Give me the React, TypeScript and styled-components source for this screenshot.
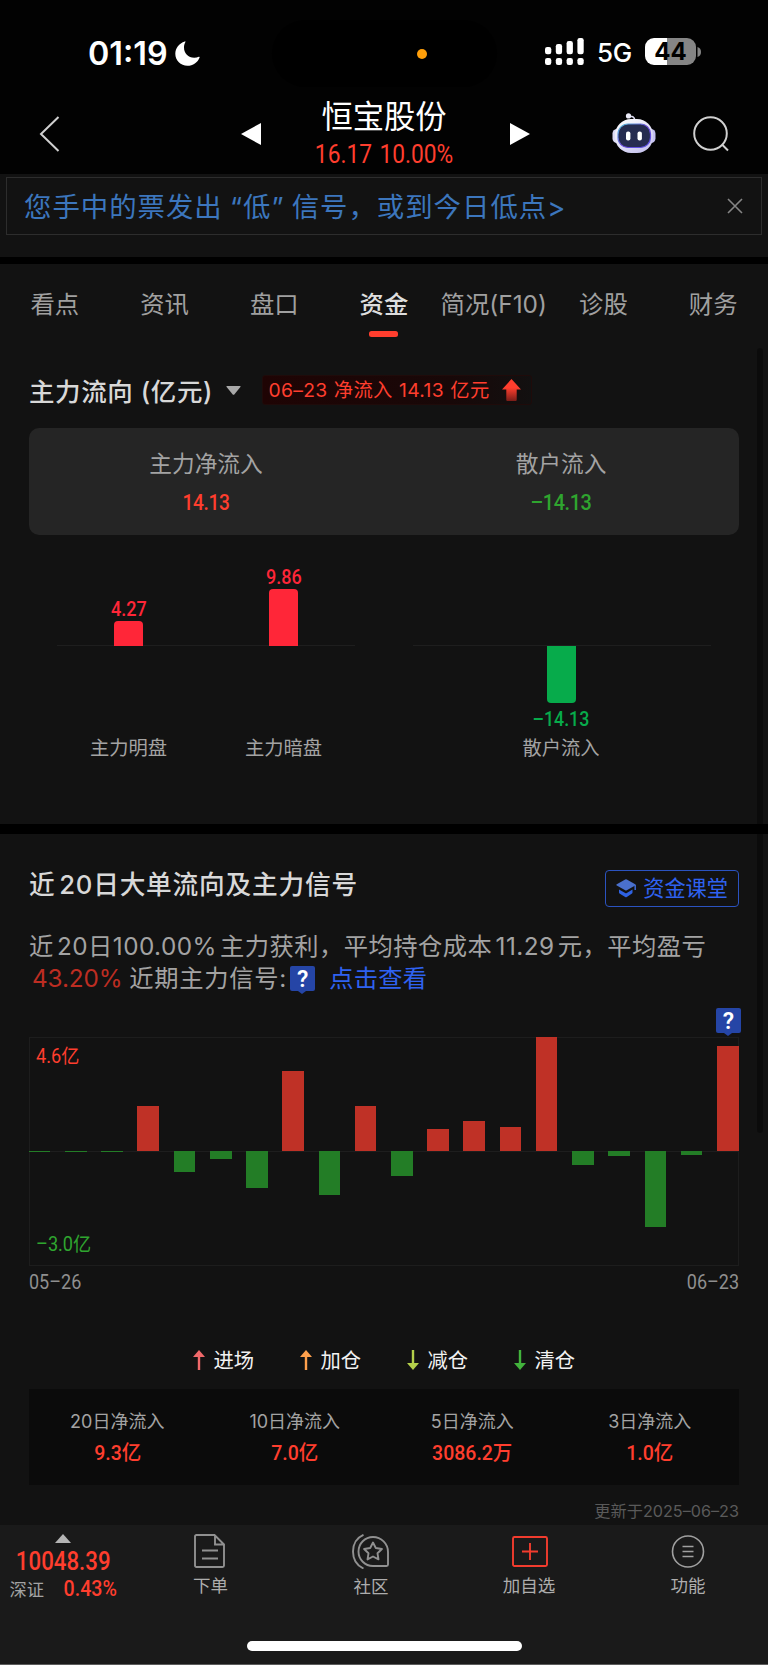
import React from 'react';
import styled, { createGlobalStyle } from 'styled-components';

const RED = '#ff3e2e';
const GREEN = '#2fa52f';
const TEXT = "Inter, 'Noto Sans CJK SC', sans-serif";
const DIGITS = "Roboto, 'Noto Sans CJK SC', sans-serif";

const Global = createGlobalStyle`
  * { box-sizing: border-box; }
  body { margin: 0; background: #121212; font-family: ${TEXT}; }
  svg { display: block; flex: none; }
`;

const Page = styled.div`
  position: relative;
  width: 768px;
  height: 1665px;
  overflow: hidden;
  display: flex;
  flex-direction: column;
  background: #121212;
  white-space: nowrap;
`;

interface LabelProps {
  $size: number;
  $color?: string;
  $weight?: number;
  $gap?: number;
  $space?: number;
  $digits?: boolean;
  $narrow?: number;
  $origin?: string;
  $dy?: number;
}

const Label = styled.span<LabelProps>`
  display: block;
  font-family: ${(p) => (p.$digits ? DIGITS : TEXT)};
  font-size: ${(p) => p.$size}px;
  font-weight: ${(p) => p.$weight ?? 400};
  line-height: 1;
  letter-spacing: ${(p) => p.$gap ?? 0}px;
  word-spacing: ${(p) => p.$space ?? 0}px;
  margin-right: ${(p) => -(p.$gap ?? 0)}px;
  color: ${(p) => p.$color ?? '#a3a3a3'};
  transform: translateY(${(p) => p.$dy ?? 0}px) scaleX(${(p) => p.$narrow ?? 1});
  transform-origin: ${(p) => p.$origin ?? 'center'};
`;

const Space = styled.div<{ $width: number }>`
  width: ${(p) => p.$width}px;
  flex: none;
`;

const Top = styled.header`
  height: 174px;
  flex: none;
  background: #020202;
`;

const StatusBar = styled.div`
  height: 87px;
  padding: 20px 67px 0 88px;
  display: grid;
  grid-template-columns: 184px 225px 1fr;
`;

const Clock = styled.div`
  height: 66px;
  display: flex;
  align-items: center;
  gap: 7px;
`;

const Island = styled.div`
  height: 67px;
  border-radius: 34px;
  background: #000;
  padding: 28.5px 0 0 145px;
`;

const MicDot = styled.div`
  width: 10px;
  height: 10px;
  border-radius: 50%;
  background: #ff9f0a;
`;

const Signals = styled.div`
  height: 63px;
  display: flex;
  align-items: center;
  justify-content: flex-end;
`;

const Network = styled.div`
  width: 61px;
  padding-left: 13px;
`;

const Battery = styled.div`
  width: 51px;
  height: 27px;
  border-radius: 9px;
  background: linear-gradient(90deg, #fff 43%, #858585 43%);
  display: flex;
  align-items: center;
  justify-content: center;
`;

const NavBar = styled.div`
  height: 87px;
  padding: 6px 39px 0;
  display: grid;
  grid-template-columns: 202px 20px 249px 1fr;
  align-items: center;
`;

const NavTitle = styled.div`
  height: 81px;
  padding: 9px 3px 0 0;
  display: flex;
  flex-direction: column;
  align-items: center;
  gap: 9px;
`;

const NavIcons = styled.div`
  display: flex;
  align-items: center;
  justify-content: space-between;
`;

const NavTools = styled.div`
  width: 117px;
  display: flex;
  align-items: center;
  justify-content: space-between;
`;

const NoticeArea = styled.section`
  height: 83px;
  flex: none;
  padding: 3px 6px;
`;

const Notice = styled.div`
  height: 58px;
  border: 1px solid #2d2d2d;
  padding: 0 18px 0 17px;
  display: flex;
  align-items: center;
  justify-content: space-between;
`;

const Divider = styled.div<{ $height: number }>`
  height: ${(p) => p.$height}px;
  flex: none;
  background: #000;
`;

const Tabs = styled.nav`
  height: 90px;
  flex: none;
  display: grid;
  grid-template-columns: repeat(7, 1fr);
`;

const Tab = styled.div`
  padding-top: 28px;
  display: flex;
  flex-direction: column;
  align-items: center;
  gap: 15px;
`;

const TabMark = styled.div`
  width: 29px;
  height: 6px;
  border-radius: 2.5px;
  background: ${RED};
`;

const FlowSection = styled.section`
  height: 470px;
  flex: none;
  padding: 21px 29px 0;
`;

const FlowHead = styled.div`
  height: 30px;
  display: flex;
  align-items: center;
`;

const FlowTag = styled.div`
  width: 270px;
  height: 30px;
  margin-left: 21px;
  padding: 0 10px 0 5px;
  border: 1px solid #1f0b0a;
  border-radius: 3px;
  background: linear-gradient(90deg, #1f0404, #180808 70%, #121010);
  display: flex;
  align-items: center;
  justify-content: space-between;
`;

const Caret = styled.svg`
  margin-left: 14px;
`;

const SummaryCard = styled.div`
  height: 107px;
  margin-top: 23px;
  border-radius: 10px;
  background: #252525;
  display: grid;
  grid-template-columns: 1fr 1fr;
`;

const SummaryCell = styled.div`
  padding: 25px 1px 0 0;
  display: flex;
  flex-direction: column;
  align-items: center;
  gap: 16px;
`;

const FlowChart = styled.div`
  display: flex;
  justify-content: space-between;
  padding: 33px 28px 0;
`;

const BarGroup = styled.div`
  width: 298px;
  display: flex;
  justify-content: center;
  background: linear-gradient(#1e1e1e, #1e1e1e) 0 77px / 100% 1px no-repeat;
`;

const BarColumn = styled.div`
  width: 155px;
  flex: none;
  display: flex;
  flex-direction: column;
  align-items: center;
`;

const BarUpper = styled.div`
  height: 78px;
  display: flex;
  flex-direction: column;
  align-items: center;
  justify-content: flex-end;
  gap: 2px;
`;

const BarLower = styled.div`
  height: 92.5px;
  display: flex;
  flex-direction: column;
  align-items: center;
  gap: 6px;
`;

const FlowBar = styled.div<{ $up?: boolean }>`
  width: 29px;
  flex: none;
  border-radius: ${(p) => (p.$up ? '4px 4px 0 0' : '0 0 4px 4px')};
  background: ${(p) => (p.$up ? '#ff2638' : '#07ab4b')};
`;

const RetailGroup = styled(BarGroup)`
  padding-right: 2px;
`;

const TrendSection = styled.section`
  height: 691px;
  flex: none;
  padding: 36px 29px 0;
`;

const TrendHead = styled.div`
  height: 37px;
  display: flex;
  align-items: center;
  justify-content: space-between;
`;

const LessonButton = styled.div`
  width: 134px;
  height: 37px;
  border: 1px solid #2b53c0;
  border-radius: 4px;
  padding: 0 10px;
  display: flex;
  align-items: center;
  justify-content: space-between;
`;

const Paragraph = styled.div`
  padding-top: 23px;
`;

const Line = styled.div`
  height: 32px;
  display: flex;
  align-items: center;
`;

const Pin = styled.div`
  position: relative;
  width: 25px;
  height: 25px;
  border-radius: 2px;
  background: #2545a6;
  display: flex;
  align-items: center;
  justify-content: center;
  &::after {
    content: '';
    position: absolute;
    left: 8px;
    top: 25px;
    border: 4.5px solid transparent;
    border-top: 3.5px solid #2545a6;
    border-bottom: 0;
  }
`;

const PinRow = styled.div`
  height: 43px;
  padding-top: 14px;
  margin-right: -2px;
  display: flex;
  justify-content: flex-end;
`;

const TrendChart = styled.div`
  height: 229px;
  border: 1px solid #1d1d1d;
  position: relative;
`;

const Scale = styled.div<{ $bottom?: boolean }>`
  position: absolute;
  left: 6px;
  ${(p) => (p.$bottom ? 'bottom: 11px;' : 'top: 9px;')}
`;

const Dates = styled.div`
  height: 31px;
  display: flex;
  align-items: center;
  justify-content: space-between;
`;

const Legend = styled.div`
  height: 42px;
  margin-top: 42px;
  display: flex;
  justify-content: center;
  align-items: center;
  gap: 46px;
`;

const LegendItem = styled.div`
  width: 61px;
  display: flex;
  align-items: center;
  justify-content: space-between;
`;

const Totals = styled.div`
  height: 96px;
  margin-top: 8px;
  background: #0b0b0b;
  display: grid;
  grid-template-columns: repeat(4, 1fr);
`;

const Total = styled.div`
  padding: 24px 1px 0 0;
  display: flex;
  flex-direction: column;
  align-items: center;
  gap: 12px;
`;

const Updated = styled.div`
  height: 40px;
  padding-top: 18px;
  display: flex;
  justify-content: flex-end;
`;

const Footer = styled.footer`
  height: 140px;
  flex: none;
  background: #1a1a1a;
  border-bottom: 1px solid #5c5c5c;
  display: flex;
  flex-direction: column;
  align-items: center;
  justify-content: space-between;
  padding-bottom: 13px;
`;

const FooterNav = styled.div`
  width: 100%;
  display: grid;
  grid-template-columns: 127px 167px 154px 162px 156px;
`;

const IndexBox = styled.div`
  padding: 9px 1px 0 0;
  display: flex;
  flex-direction: column;
  gap: 6px;
  align-items: center;
`;

const IndexRow = styled.div`
  width: 107px;
  margin-top: -2px;
  display: flex;
  justify-content: space-between;
  align-items: center;
`;

const FooterItem = styled.div`
  padding-top: 9px;
  display: flex;
  flex-direction: column;
  align-items: center;
  gap: 9px;
`;

const FooterIcon = styled.div<{ $shift: number }>`
  transform: translateX(${(p) => p.$shift}px);
`;

const HomeIndicator = styled.div`
  width: 275px;
  height: 10px;
  border-radius: 5px;
  background: #fff;
`;

const ScrollThumb = styled.div`
  position: absolute;
  left: 757px;
  top: 348px;
  width: 6px;
  height: 785px;
  border-radius: 3px;
  background: rgba(0, 0, 0, 0.35);
`;

const tabs = ['看点', '资讯', '盘口', '资金', '简况(F10)', '诊股', '财务'];

const flows = [
  { name: '主力明盘', value: '4.27', size: 25 },
  { name: '主力暗盘', value: '9.86', size: 57.5 },
];

const trend = [-1.3, -0.9, -0.9, 45, -20.5, -7.7, -37.3, 80, -44, 44.7, -24.5, 22, 30, 24, 114, -13.7, -4.7, -75.5, -4, 105.5];

const legend = [
  { name: '进场', color: '#f0696a', up: true },
  { name: '加仓', color: '#ffa04c', up: true },
  { name: '减仓', color: '#b4d04a', up: false },
  { name: '清仓', color: '#42b33c', up: false },
];

const totals = [
  ['20日净流入', '9.3亿'],
  ['10日净流入', '7.0亿'],
  ['5日净流入', '3086.2万'],
  ['3日净流入', '1.0亿'],
];

const MoonIcon = () => (
  <svg width="25" height="25" viewBox="0 0 25 25">
    <path d="M9.800.4C4 2.300.3 7 .3 12.700.3 19.400 5.700 24.700 12.400 24.700c5.600 0 10.300-3.300 12.200-8.300.2-.6-.2-.9-.8-.6-1.400.6-2.900.9-4.600.9-6 0-10.200-4.200-10.200-10.200 0-1.900.4-3.600 1.300-5.200.3-.6 0-1.100-.5-.9Z" fill="#fff" />
  </svg>
);

const SignalIcon = () => (
  <svg width="39" height="27" viewBox="0 0 39 27" fill="#fff">
    {[9, 6, 3, 0].map((y, i) => (
      <g key={y}>
        <rect x={i * 10.8} y={y} width="6.3" height={16.2 - y} rx="2.2" />
        <rect x={i * 10.8} y="20" width="6.3" height="7" rx="2.2" />
      </g>
    ))}
  </svg>
);

const RobotIcon = () => (
  <svg width="44" height="41" viewBox="0 0 44 41">
    <defs>
      <linearGradient id="shell" x1="0" y1="0" x2="0.6" y2="1">
        <stop offset="0" stopColor="#fff" />
        <stop offset="0.6" stopColor="#e4e3f8" />
        <stop offset="1" stopColor="#c9c6ee" />
      </linearGradient>
      <linearGradient id="rim" x1="0" y1="0" x2="1" y2="1">
        <stop offset="0" stopColor="#58c8d8" />
        <stop offset="0.5" stopColor="#6a48d8" />
        <stop offset="1" stopColor="#5a55e8" />
      </linearGradient>
    </defs>
    <path d="M16 3.5c4-.8 6.500.2 7 4" fill="none" stroke="#dcdcf2" strokeWidth="1.5" />
    <circle cx="16.5" cy="2.9" r="2.6" fill="#ececfa" />
    <rect x="0.5" y="16" width="9" height="14" rx="4.5" fill="#dddcf5" />
    <rect x="34.5" y="16" width="9" height="14" rx="4.5" fill="#c4c1f2" />
    <rect x="3" y="6" width="38" height="34" rx="16" fill="url(#shell)" />
    <rect x="6" y="11" width="32.5" height="23.5" rx="10" fill="#262c50" stroke="url(#rim)" strokeWidth="1.2" />
    <rect x="14" y="18.5" width="4.4" height="9" rx="2" fill="#fff" />
    <rect x="25.5" y="18.5" width="4.4" height="9" rx="2" fill="#fff" />
  </svg>
);

const CapIcon = () => (
  <svg width="20" height="19" viewBox="0 0 20 19">
    <path d="M9.2.4q.8-.4 1.600 0l8.400 4.800q1 .7 0 1.400l-8.400 4.700q-.8.4-1.600 0L.8 6.600q-1-.7 0-1.400Z" fill="#4a70cc" />
    <path d="M3 10.600 9.200 14q.8.400 1.600 0L16.500 10.600v2.900q0 .6-.5.900l-5.200 3.500q-.8.500-1.600 0l-5.700-3.500q-.5-.3-.5-.9Z" fill="#2f62e2" />
    <path d="M19.200 6v5" stroke="#3f6ad6" strokeWidth="1.500" />
  </svg>
);

const LegendArrow = ({ up, color }: { up: boolean; color: string }) => (
  <svg width="12" height="20" viewBox="0 0 12 20">
    <g transform={up ? undefined : 'rotate(180 6 10)'}>
      <rect x="4.8" y="3" width="2.4" height="17" fill={color} />
      <path d="M6 0 12 7H0Z" fill={color} />
    </g>
  </svg>
);

const OrderIcon = () => (
  <svg width="32" height="34" viewBox="0 0 32 34" fill="none" stroke="#909090" strokeWidth="1.9">
    <path d="M3 1h18l9.500 9.500v21q0 1.500-1.500 1.500H3q-1.500 0-1.500-1.500V2.500Q1.500 1 3 1ZM21.500 1v9.500h9M8.500 16.500h16M8.500 24.500h16" />
  </svg>
);

const CommunityIcon = () => (
  <svg width="37" height="35" viewBox="0 0 37 35" fill="none" stroke="#909090" strokeWidth="1.9">
    <path d="M21 3a15 15 0 0 1 15 15v12.500q0 1.500-1.500 1.500H21A14.500 14.500 0 0 1 21 3Z" />
    <path d="M11.500.8C5 3.500 1 10 1 17.500S5 31.500 11.500 34.500" />
    <path d="m21 8.500 2.800 5.500 6.100 1-4.400 4.300 1 6.100-5.500-2.900-5.500 2.900 1-6.100-4.400-4.300 6.100-1Z" strokeLinejoin="round" />
  </svg>
);

const AddIcon = () => (
  <svg width="36" height="34" viewBox="0 0 36 34" fill="none" stroke="#f23c2e" strokeWidth="1.9">
    <rect x="1" y="3" width="34" height="29" rx="1.5" />
    <path d="M18 9v17M10 17.500h16" />
  </svg>
);

const MenuIcon = () => (
  <svg width="34" height="34" viewBox="0 0 34 34" fill="none" stroke="#a0a0a0" strokeWidth="1.6">
    <circle cx="17" cy="17.5" r="15.5" />
    <path d="M11.500 12.500h11M11.500 17.500h11M11.500 22.500h11" />
  </svg>
);

const footerItems = [
  { name: '下单', icon: <OrderIcon />, shift: -1.5 },
  { name: '社区', icon: <CommunityIcon />, shift: -1 },
  { name: '加自选', icon: <AddIcon />, shift: 1 },
  { name: '功能', icon: <MenuIcon />, shift: 0 },
];

const HelpPin = () => (
  <Pin>
    <Label $size={23} $weight={600} $color="#fff" $dy={1} $digits>?</Label>
  </Pin>
);

export default function App() {
  return (
    <Page>
      <Global />
      <Top>
        <StatusBar>
          <Clock>
            <Label $size={32.3} $weight={600} $color="#fff" $dy={0.5}>01:19</Label>
            <MoonIcon />
          </Clock>
          <Island><MicDot /></Island>
          <Signals>
            <SignalIcon />
            <Network><Label $size={26} $weight={500} $color="#fff" $gap={-0.3} $dy={1}>5G</Label></Network>
            <Battery><Label $size={24} $weight={700} $color="#000">44</Label></Battery>
            <svg width="5" height="10" viewBox="0 0 5 10"><path d="M1.500 0Q5 1 5 5T1.500 10Z" fill="#858585" /></svg>
          </Signals>
        </StatusBar>
        <NavBar>
          <svg width="21" height="36" viewBox="0 0 21 36"><path d="M19.500 1 2 18 19.500 35" fill="none" stroke="#d0d0d0" strokeWidth="2" /></svg>
          <svg width="20" height="22" viewBox="0 0 20 22"><path d="M20 0 0 11 20 22Z" fill="#fff" /></svg>
          <NavTitle>
            <Label $size={31.3} $color="#fff">恒宝股份</Label>
            <Label $size={25} $color={RED} $space={2} $narrow={0.91} $digits>16.17 10.00%</Label>
          </NavTitle>
          <NavIcons>
            <svg width="20" height="22" viewBox="0 0 20 22"><path d="M0 0 20 11 0 22Z" fill="#fff" /></svg>
            <NavTools>
              <RobotIcon />
              <svg width="36" height="36" viewBox="0 0 36 36" fill="none" stroke="#d0d0d0" strokeWidth="2">
                <circle cx="17.5" cy="17.5" r="16.3" />
                <path d="m29 28.500 6 6" />
              </svg>
            </NavTools>
          </NavIcons>
        </NavBar>
      </Top>
      <NoticeArea>
        <Notice>
          <Label $size={27.4} $color="#3c76bd" $gap={1} $space={-1.5} $dy={1.5}>您手中的票发出 “低” 信号，或到今日低点&gt;</Label>
          <svg width="16" height="16" viewBox="0 0 16 16"><path d="m1 1 14 14M15 1 1 15" stroke="#858585" strokeWidth="1.6" /></svg>
        </Notice>
      </NoticeArea>
      <Divider $height={7} />
      <Tabs>
        {tabs.map((name) => (
          <Tab key={name}>
            <Label $size={24.4} $color={name === '资金' ? '#dedede' : '#a0a0a0'} $weight={name === '资金' ? 500 : 400}>{name}</Label>
            {name === '资金' && <TabMark />}
          </Tab>
        ))}
      </Tabs>
      <FlowSection>
        <FlowHead>
          <Label $size={25.5} $weight={500} $color="#d8d8d8" $gap={0.6} $dy={1.5}>主力流向 (亿元)</Label>
          <Caret width="15" height="9" viewBox="0 0 15 9"><path d="M1 0h13q1 0 .4.900L8.500 8.300q-1 1-2 0L.6.900Q0 0 1 0Z" fill="#a8a8a8" /></Caret>
          <FlowTag>
            <Label $size={19.3} $color={RED} $gap={0.35} $space={0.5} $dy={1}>06–23 净流入 14.13 亿元</Label>
            <svg width="19" height="22" viewBox="0 0 19 22">
              <defs>
                <linearGradient id="rise" x1="0" y1="0" x2="0" y2="1">
                  <stop offset="0.4" stopColor="#ff3e2e" />
                  <stop offset="1" stopColor="#7a1d18" />
                </linearGradient>
              </defs>
              <path d="M9.500 0 19 10.500h-4.300v10.500q0 1-1 1h-8.400q-1 0-1-1V10.500H0Z" fill="url(#rise)" />
            </svg>
          </FlowTag>
        </FlowHead>
        <SummaryCard>
          <SummaryCell>
            <Label $size={22.7}>主力净流入</Label>
            <Label $size={22} $weight={500} $color={RED} $gap={-0.4} $narrow={0.87} $digits>14.13</Label>
          </SummaryCell>
          <SummaryCell>
            <Label $size={22.7}>散户流入</Label>
            <Label $size={22} $weight={500} $color={GREEN} $gap={-0.4} $narrow={0.9} $digits>–14.13</Label>
          </SummaryCell>
        </SummaryCard>
        <FlowChart>
          <BarGroup>
            {flows.map((flow) => (
              <BarColumn key={flow.name}>
                <BarUpper>
                  <Label $size={20} $weight={500} $color="#ff2638" $narrow={0.9} $digits>{flow.value}</Label>
                  <FlowBar $up style={{ height: flow.size }} />
                </BarUpper>
                <BarLower />
                <Label $size={19.3}>{flow.name}</Label>
              </BarColumn>
            ))}
          </BarGroup>
          <RetailGroup>
            <BarColumn>
              <BarUpper />
              <BarLower>
                <FlowBar style={{ height: 57 }} />
                <Label $size={20} $weight={500} $color="#07ab4b" $narrow={0.89} $digits>–14.13</Label>
              </BarLower>
              <Label $size={19.3}>散户流入</Label>
            </BarColumn>
          </RetailGroup>
        </FlowChart>
      </FlowSection>
      <Divider $height={10} />
      <TrendSection>
        <TrendHead>
          <Label $size={25.7} $weight={500} $color="#d8d8d8" $gap={0.8} $space={-4} $dy={-4.5}>近 20日大单流向及主力信号</Label>
          <LessonButton>
            <CapIcon />
            <Label $size={21.2} $color="#2f62f0">资金课堂</Label>
          </LessonButton>
        </TrendHead>
        <Paragraph>
          <Line><Label $size={24.3} $gap={0.45} $space={-4}>近 20日100.00% 主力获利，平均持仓成本 11.29 元，平均盈亏</Label></Line>
          <Line>
            <Space $width={3} />
            <Label $size={24.3} $color="#bd2d22" $gap={-0.1}>43.20%</Label>
            <Space $width={6.5} />
            <Label $size={24.3} $gap={0.7}>近期主力信号:</Label>
            <Space $width={4} />
            <HelpPin />
            <Space $width={14} />
            <Label $size={24.3} $color="#2f62f0" $gap={0.2}>点击查看</Label>
          </Line>
        </Paragraph>
        <PinRow><HelpPin /></PinRow>
        <TrendChart>
          <svg width="708" height="227" viewBox="30 1038 708 227" overflow="visible" shapeRendering="crispEdges">
            <path d="M29 1151.500H739" stroke="#1e1e1e" />
            {trend.map((v, i) => (
              <rect key={i} x={28.8 + i * 36.22} y={v > 0 ? 1151 - v : 1151} width="21.6" height={Math.abs(v)} fill={v > 0 ? '#bf3126' : '#237d26'} />
            ))}
          </svg>
          <Scale><Label $size={19.5} $color={RED} $narrow={0.93} $origin="left" $digits>4.6亿</Label></Scale>
          <Scale $bottom><Label $size={19.5} $color={GREEN} $narrow={0.93} $origin="left" $digits>–3.0亿</Label></Scale>
        </TrendChart>
        <Dates>
          <Label $size={20} $color="#8f8f8f" $narrow={0.9} $origin="left" $digits>05–26</Label>
          <Label $size={20} $color="#8f8f8f" $narrow={0.9} $origin="right" $digits>06–23</Label>
        </Dates>
        <Legend>
          {legend.map((item) => (
            <LegendItem key={item.name}>
              <LegendArrow up={item.up} color={item.color} />
              <Label $size={20.3} $color="#f2f2f2" $dy={1}>{item.name}</Label>
            </LegendItem>
          ))}
        </Legend>
        <Totals>
          {totals.map(([name, value]) => (
            <Total key={name}>
              <Label $size={18}>{name}</Label>
              <Label $size={20.5} $weight={500} $color={RED} $narrow={0.95} $digits>{value}</Label>
            </Total>
          ))}
        </Totals>
        <Updated><Label $size={16.2} $color="#5a5a5a">更新于2025–06–23</Label></Updated>
      </TrendSection>
      <Footer>
        <FooterNav>
          <IndexBox>
            <svg width="16" height="9" viewBox="0 0 16 9"><path d="M8 0 16 9H0Z" fill="#b5b5b5" /></svg>
            <Label $size={25} $weight={500} $color={RED} $narrow={0.89} $digits>10048.39</Label>
            <IndexRow>
              <Label $size={17.3} $dy={0.5}>深证</Label>
              <Label $size={22} $weight={500} $color={RED} $narrow={0.89} $origin="right" $digits>0.43%</Label>
            </IndexRow>
          </IndexBox>
          {footerItems.map((item) => (
            <FooterItem key={item.name}>
              <FooterIcon $shift={item.shift}>{item.icon}</FooterIcon>
              <Label $size={17.5} $color="#adadad">{item.name}</Label>
            </FooterItem>
          ))}
        </FooterNav>
        <HomeIndicator />
      </Footer>
      <ScrollThumb />
    </Page>
  );
}
